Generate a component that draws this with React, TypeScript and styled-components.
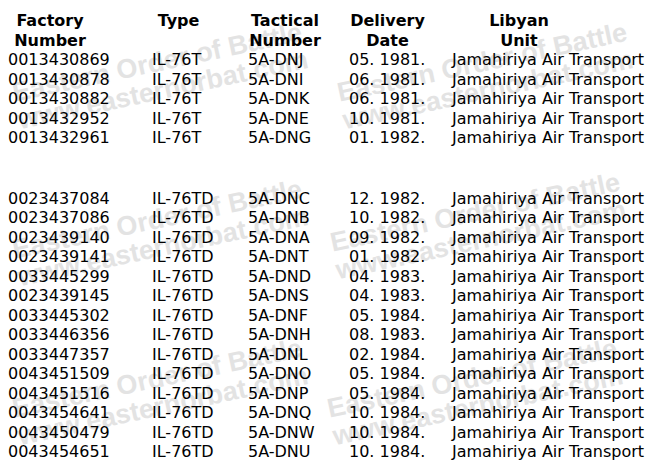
import React from "react";
import styled, { createGlobalStyle } from "styled-components";

const GlobalStyle = createGlobalStyle`
  html, body {
    margin: 0;
    padding: 0;
    background: #ffffff;
  }
  body {
    font-family: "DejaVu Sans", Verdana, sans-serif;
    color: #000000;
  }
`;

const Page = styled.div`
  position: relative;
  width: 658px;
  height: 469px;
  overflow: hidden;
  background: #ffffff;
`;

const WatermarkLayer = styled.div`
  position: absolute;
  inset: 0;
  pointer-events: none;
  z-index: 0;
`;

const Watermark = styled.div<{ $x: number; $y: number }>`
  position: absolute;
  left: ${(p) => p.$x}px;
  top: ${(p) => p.$y}px;
  transform: translate(-50%, -50%) rotate(-12deg);
  display: flex;
  flex-direction: column;
  align-items: center;
  font-family: "Liberation Sans", Arial, sans-serif;
  font-weight: bold;
  font-size: 27px;
  line-height: 28px;
  color: #e3e3e3;
  white-space: nowrap;
`;

const Table = styled.div`
  position: relative;
  z-index: 1;
  padding: 11px 0 0 8px;
  display: flex;
  flex-direction: column;
`;

const Row = styled.div`
  display: grid;
  grid-template-columns: 144px 96px 101px 103px 1fr;
  font-size: 16px;
  line-height: 19.5px;
  white-space: nowrap;
`;

const HeaderCell = styled.div<{ $center: number }>`
  width: ${(p) => p.$center * 2}px;
  text-align: center;
  font-weight: bold;
`;

const Cell = styled.div`
  font-weight: normal;
`;

const Spacer = styled.div`
  height: 41.3px;
`;

type Entry = [string, string, string, string];

const first: Entry[] = [
  ["0013430869", "IL-76T", "5A-DNJ", "05. 1981."],
  ["0013430878", "IL-76T", "5A-DNI", "06. 1981."],
  ["0013430882", "IL-76T", "5A-DNK", "06. 1981."],
  ["0013432952", "IL-76T", "5A-DNE", "10. 1981."],
  ["0013432961", "IL-76T", "5A-DNG", "01. 1982."],
];

const second: Entry[] = [
  ["0023437084", "IL-76TD", "5A-DNC", "12. 1982."],
  ["0023437086", "IL-76TD", "5A-DNB", "10. 1982."],
  ["0023439140", "IL-76TD", "5A-DNA", "09. 1982."],
  ["0023439141", "IL-76TD", "5A-DNT", "01. 1982."],
  ["0033445299", "IL-76TD", "5A-DND", "04. 1983."],
  ["0023439145", "IL-76TD", "5A-DNS", "04. 1983."],
  ["0033445302", "IL-76TD", "5A-DNF", "05. 1984."],
  ["0033446356", "IL-76TD", "5A-DNH", "08. 1983."],
  ["0033447357", "IL-76TD", "5A-DNL", "02. 1984."],
  ["0043451509", "IL-76TD", "5A-DNO", "05. 1984."],
  ["0043451516", "IL-76TD", "5A-DNP", "05. 1984."],
  ["0043454641", "IL-76TD", "5A-DNQ", "10. 1984."],
  ["0043450479", "IL-76TD", "5A-DNW", "10. 1984."],
  ["0043454651", "IL-76TD", "5A-DNU", "10. 1984."],
];

const headers: { lines: [string, string]; center: number }[] = [
  { lines: ["Factory", "Number"], center: 42 },
  { lines: ["Type", "\u00a0"], center: 26.5 },
  { lines: ["Tactical", "Number"], center: 37 },
  { lines: ["Delivery", "Date"], center: 38.5 },
  { lines: ["Libyan", "Unit"], center: 67 },
];

const marks = [
  { x: 160, y: 76 },
  { x: 485, y: 76 },
  { x: 160, y: 233 },
  { x: 478, y: 226 },
  { x: 160, y: 392 },
  { x: 475, y: 392 },
];

const DataRow = ({ entry }: { entry: Entry }) => (
  <Row>
    <Cell>{entry[0]}</Cell>
    <Cell>{entry[1]}</Cell>
    <Cell>{entry[2]}</Cell>
    <Cell>{entry[3]}</Cell>
    <Cell>Jamahiriya Air Transport</Cell>
  </Row>
);

export default function App() {
  return (
    <>
      <GlobalStyle />
      <Page>
        <WatermarkLayer>
          {marks.map((m, i) => (
            <Watermark key={i} $x={m.x} $y={m.y}>
              <span>Eastern Order of Battle</span>
              <span>www.easternorbat.com</span>
            </Watermark>
          ))}
        </WatermarkLayer>
        <Table>
          <Row>
            {headers.map((h, i) => (
              <HeaderCell key={i} $center={h.center}>
                {h.lines[0]}
                <br />
                {h.lines[1]}
              </HeaderCell>
            ))}
          </Row>
          {first.map((e) => (
            <DataRow key={e[0]} entry={e} />
          ))}
          <Spacer />
          {second.map((e) => (
            <DataRow key={e[0]} entry={e} />
          ))}
        </Table>
      </Page>
    </>
  );
}
